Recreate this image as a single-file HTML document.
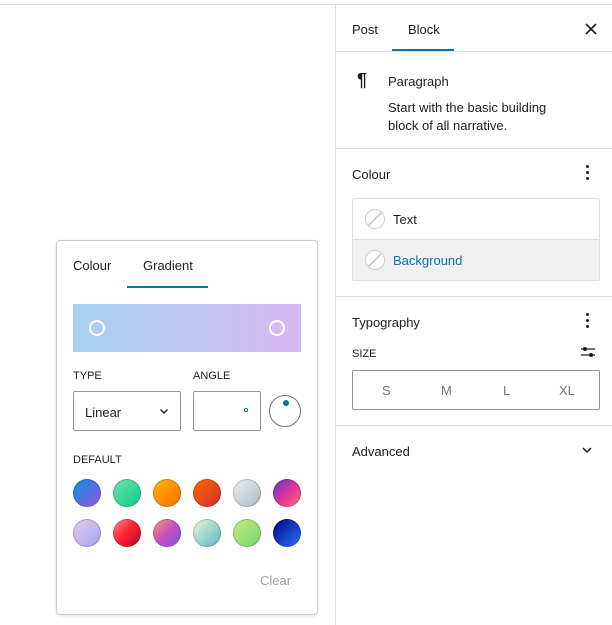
<!DOCTYPE html>
<html><head><style>
*{box-sizing:border-box;margin:0;padding:0}
body{width:612px;height:625px;background:#fff;font-family:"Liberation Sans",sans-serif;color:#1e1e1e;position:relative;overflow:hidden;font-size:13px}
.a{position:absolute}
.sw{position:absolute;width:28px;height:28px;border-radius:50%;box-shadow:inset 0 0 0 1px rgba(0,0,0,.2)}
.lbl{font-size:11px;text-transform:uppercase}
</style></head><body>
<div class="a" style="left:0;top:4px;width:612px;height:1px;background:#e0e0e0"></div>
<div class="a" style="left:335px;top:4px;width:1px;height:621px;background:#e0e0e0"></div>
<!-- sidebar -->
<div class="a" style="left:352px;top:22px">Post</div>
<div class="a" style="left:408px;top:22px">Block</div>
<div class="a" style="left:392px;top:49px;width:62px;height:2px;background:#0a73aa"></div>
<div class="a" style="left:336px;top:51px;width:276px;height:1px;background:#e0e0e0"></div>
<svg class="a" style="left:584px;top:22px" width="14" height="14" viewBox="0 0 14 14"><path d="M2 2L12 12M12 2L2 12" stroke="#1e1e1e" stroke-width="1.6"/></svg>
<div class="a" style="left:357px;top:70px;font-size:18px;font-weight:bold">¶</div>
<div class="a" style="left:388px;top:74px">Paragraph</div>
<div class="a" style="left:388px;top:99px;line-height:18px">Start with the basic building<br>block of all narrative.</div>
<div class="a" style="left:336px;top:148px;width:276px;height:1px;background:#e0e0e0"></div>
<div class="a" style="left:352px;top:167px">Colour</div>
<div class="a" style="left:586px;top:165px;width:3px;line-height:5px;font-size:0">
<div style="width:3px;height:3px;background:#1e1e1e;border-radius:50%;margin-bottom:3px"></div><div style="width:3px;height:3px;background:#1e1e1e;border-radius:50%;margin-bottom:3px"></div><div style="width:3px;height:3px;background:#1e1e1e;border-radius:50%"></div></div>
<div class="a" style="left:352px;top:198px;width:248px;height:83px;border:1px solid #ddd;border-radius:2px;overflow:hidden">
<div style="height:41px;border-bottom:1px solid #ddd;position:relative"><div class="a" style="left:12px;top:10px;width:20px;height:20px;border-radius:50%;border:1px solid #ccc;background:linear-gradient(135deg,transparent 47%,#ccc 47%,#ccc 53%,transparent 53%)"></div><div class="a" style="left:40px;top:13px">Text</div></div>
<div style="height:41px;background:#f0f0f0;position:relative"><div class="a" style="left:12px;top:10px;width:20px;height:20px;border-radius:50%;border:1px solid #ccc;background:linear-gradient(135deg,#fff 47%,#ccc 47%,#ccc 53%,#fff 53%)"></div><div class="a" style="left:40px;top:13px;color:#0a73aa">Background</div></div>
</div>
<div class="a" style="left:336px;top:296px;width:276px;height:1px;background:#e0e0e0"></div>
<div class="a" style="left:352px;top:315px">Typography</div>
<div class="a" style="left:586px;top:313px;width:3px;font-size:0">
<div style="width:3px;height:3px;background:#1e1e1e;border-radius:50%;margin-bottom:3px"></div><div style="width:3px;height:3px;background:#1e1e1e;border-radius:50%;margin-bottom:3px"></div><div style="width:3px;height:3px;background:#1e1e1e;border-radius:50%"></div></div>
<div class="a lbl" style="left:352px;top:348px">Size</div>
<svg class="a" style="left:580px;top:345px" width="16" height="14" viewBox="0 0 16 14"><path d="M1 4H15M1 10H15" stroke="#1e1e1e" stroke-width="1.3"/><circle cx="5" cy="4" r="2" fill="#1e1e1e"/><circle cx="11" cy="10" r="2" fill="#1e1e1e"/></svg>
<div class="a" style="left:352px;top:370px;width:248px;height:40px;border:1px solid #949494;border-radius:2px;color:#757575">
<span class="a" style="left:29px;top:12px">S</span><span class="a" style="left:88px;top:12px">M</span><span class="a" style="left:150px;top:12px">L</span><span class="a" style="left:206px;top:12px">XL</span></div>
<div class="a" style="left:336px;top:425px;width:276px;height:1px;background:#e0e0e0"></div>
<div class="a" style="left:352px;top:444px">Advanced</div>
<svg class="a" style="left:581px;top:446px" width="12" height="8" viewBox="0 0 12 8"><path d="M2 2L6 6L10 2" stroke="#1e1e1e" stroke-width="1.5" fill="none"/></svg>
<!-- popover -->
<div class="a" style="left:56px;top:240px;width:262px;height:375px;border:1px solid #ccc;border-radius:4px;background:#fff;box-shadow:0 1px 3px rgba(0,0,0,.12)"></div>
<div class="a" style="left:73px;top:258px">Colour</div>
<div class="a" style="left:143px;top:258px">Gradient</div>
<div class="a" style="left:127px;top:286px;width:81px;height:2px;background:#0a73aa"></div>
<div class="a" style="left:73px;top:304px;width:228px;height:48px;background:linear-gradient(90deg,#a8d3f0,#d6b9f2)"></div>
<div class="a" style="left:89px;top:320px;width:16px;height:16px;border-radius:50%;border:2px solid #fff"></div>
<div class="a" style="left:269px;top:320px;width:16px;height:16px;border-radius:50%;border:2px solid #fff"></div>
<div class="a lbl" style="left:73px;top:370px">Type</div>
<div class="a lbl" style="left:193px;top:370px">Angle</div>
<div class="a" style="left:73px;top:391px;width:108px;height:40px;border:1px solid #949494;border-radius:2px"><span class="a" style="left:11px;top:13px">Linear</span>
<svg class="a" style="left:85px;top:16px" width="10" height="7" viewBox="0 0 10 7"><path d="M1.5 1.5L5 5L8.5 1.5" stroke="#1e1e1e" stroke-width="1.4" fill="none"/></svg></div>
<div class="a" style="left:193px;top:391px;width:68px;height:40px;border:1px solid #949494;border-radius:2px"><div class="a" style="left:50px;top:16px;width:4px;height:4px;border:1px solid #0a73aa;border-radius:50%"></div></div>
<div class="a" style="left:269px;top:395px;width:32px;height:32px;border:1px solid #757575;border-radius:50%"><div class="a" style="left:13px;top:4px;width:6px;height:6px;background:#0a73aa;border-radius:50%"></div></div>
<div class="a lbl" style="left:73px;top:454px">Default</div>
<div class="sw" style="left:73px;top:479px;background:linear-gradient(135deg,#0693e3,#9b51e0)"></div>
<div class="sw" style="left:113px;top:479px;background:linear-gradient(135deg,#7adcb4,#00d082)"></div>
<div class="sw" style="left:153px;top:479px;background:linear-gradient(135deg,#fcb900,#ff6900)"></div>
<div class="sw" style="left:193px;top:479px;background:linear-gradient(135deg,#ff6900,#cf2e2e)"></div>
<div class="sw" style="left:233px;top:479px;background:linear-gradient(135deg,#eef2f3,#a9b8c3)"></div>
<div class="sw" style="left:273px;top:479px;background:linear-gradient(135deg,#4a3ec8,#e0329d 50%,#fd7060)"></div>
<div class="sw" style="left:73px;top:519px;background:linear-gradient(135deg,#e8c8f0,#a3a6ef)"></div>
<div class="sw" style="left:113px;top:519px;background:linear-gradient(135deg,#ff8a8a,#ff1f2e 50%,#a00b2a)"></div>
<div class="sw" style="left:153px;top:519px;background:linear-gradient(135deg,#f0a060,#c84fc0 50%,#6a5de0)"></div>
<div class="sw" style="left:193px;top:519px;background:linear-gradient(135deg,#f0f5d8,#52b8c0)"></div>
<div class="sw" style="left:233px;top:519px;background:linear-gradient(135deg,#c0f080,#7ad070)"></div>
<div class="sw" style="left:273px;top:519px;background:linear-gradient(135deg,#020381,#2874fc)"></div>
<div class="a" style="left:260px;top:573px;color:#a0a0a0">Clear</div>
</body></html>
